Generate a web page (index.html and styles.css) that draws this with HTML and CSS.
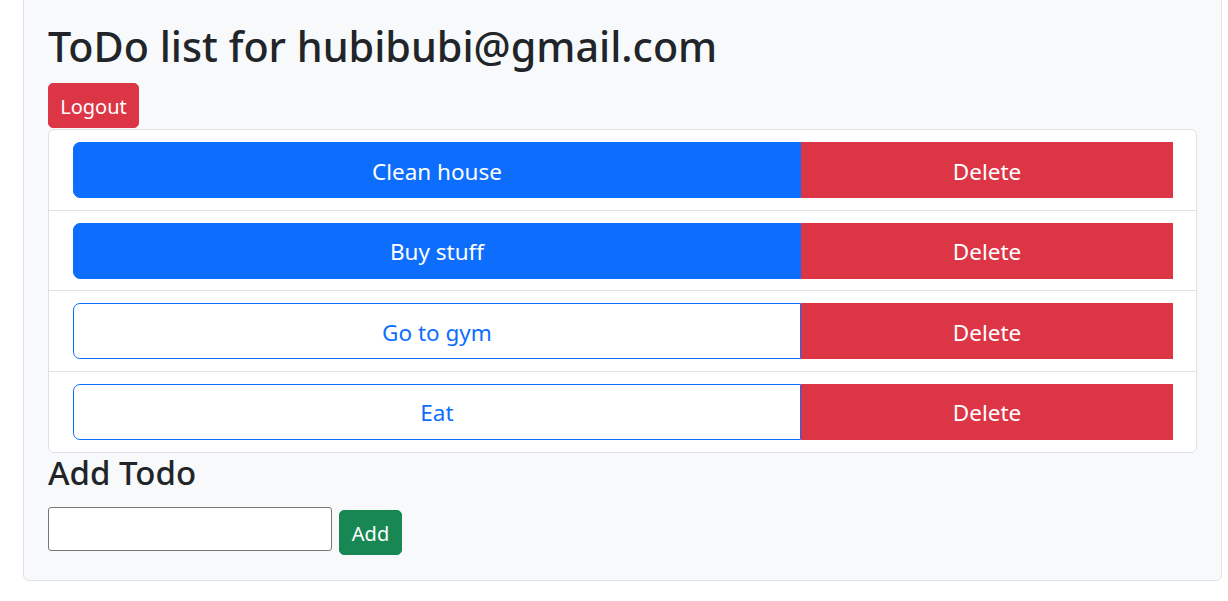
FILE: index.html
```html
<!DOCTYPE html>
<html lang="en">
<head>
<meta charset="utf-8">
<title>ToDo</title>
<link rel="stylesheet" href="styles.css">
</head>
<body>
<div class="page">
  <h1 class="title">ToDo list for hubibubi@gmail.com</h1>
  <div class="bar"><button class="btn btn-danger">Logout</button></div>
  <ul class="list">
    <li class="item">
      <div class="todo">
        <button class="btn-lg todo-btn todo-done">Clean house</button>
        <button class="btn-lg del-btn">Delete</button>
      </div>
    </li>
    <li class="item">
      <div class="todo">
        <button class="btn-lg todo-btn todo-done">Buy stuff</button>
        <button class="btn-lg del-btn">Delete</button>
      </div>
    </li>
    <li class="item">
      <div class="todo">
        <button class="btn-lg todo-btn todo-open">Go to gym</button>
        <button class="btn-lg del-btn">Delete</button>
      </div>
    </li>
    <li class="item">
      <div class="todo">
        <button class="btn-lg todo-btn todo-open">Eat</button>
        <button class="btn-lg del-btn">Delete</button>
      </div>
    </li>
  </ul>
  <h3 class="subtitle">Add Todo</h3>
  <form class="add-form">
    <input class="add-input" type="text">
    <button class="btn btn-success" type="button">Add</button>
  </form>
</div>
</body>
</html>
```
FILE: styles.css
```css
* { box-sizing: border-box; }
html, body { margin: 0; padding: 0; background: #fff; }
body {
  font-family: "Noto Sans", "Open Sans", sans-serif;
  color: #212529;
}
.page {
  margin: -20px 0 0 23px;
  width: 1199px;
  height: 601px;
  border: 1px solid #dee2e6;
  border-radius: 6px;
  background: #f8f9fa;
  padding: 37px 24px 24px 24px;
}
.title {
  margin: 0 0 9.3px 0;
  font-size: 41.3px;
  line-height: 56px;
  font-weight: 500;
}
.bar { display: flex; }
.btn {
  display: inline-flex;
  align-items: center;
  justify-content: center;
  font-family: inherit;
  font-size: 20px;
  line-height: 28px;
  height: 44.5px;
  padding: 2px 8px 0 8px;
  border: 1px solid transparent;
  border-radius: 5px;
  color: #fff;
  cursor: pointer;
}
.btn-danger { background: #dc3545; border-color: #dc3545; width: 91px; }
.btn-success { background: #198754; border-color: #198754; width: 63px; height: 45px; margin-top: 3.5px; }
.list {
  list-style: none;
  margin: 1.5px 0 0 0;
  padding: 0;
  background: #fff;
  border: 1px solid #dee2e6;
  border-radius: 6px;
}
.item {
  padding: 11.8px 23px 11.8px 24px;
  border-top: 1px solid #dee2e6;
}
.item:first-child { border-top: none; }
.todo { display: flex; }
.btn-lg {
  font-family: inherit;
  font-size: 22.5px;
  line-height: 30px;
  height: 56px;
  padding: 3px 16px 0 16px;
  border: 1px solid transparent;
  cursor: pointer;
}
.todo-btn {
  width: 728px;
  border-radius: 7px 0 0 7px;
}
.todo-done { background: #0d6efd; border-color: #0d6efd; color: #fff; }
.todo-open { background: #fff; border-color: #0d6efd; color: #0d6efd; }
.del-btn {
  flex: 1;
  background: #dc3545;
  border-color: #dc3545;
  color: #fff;
  border-radius: 0;
}
.subtitle {
  margin: 0;
  font-size: 33px;
  line-height: 39.2px;
  font-weight: 500;
}
.add-form {
  display: flex;
  align-items: flex-start;
  gap: 7px;
  margin-top: 15px;
}
.add-input {
  width: 284px;
  height: 44px;
  border: 1px solid #767676;
  border-radius: 3px;
  background: #fff;
  font-size: 18px;
}
```
